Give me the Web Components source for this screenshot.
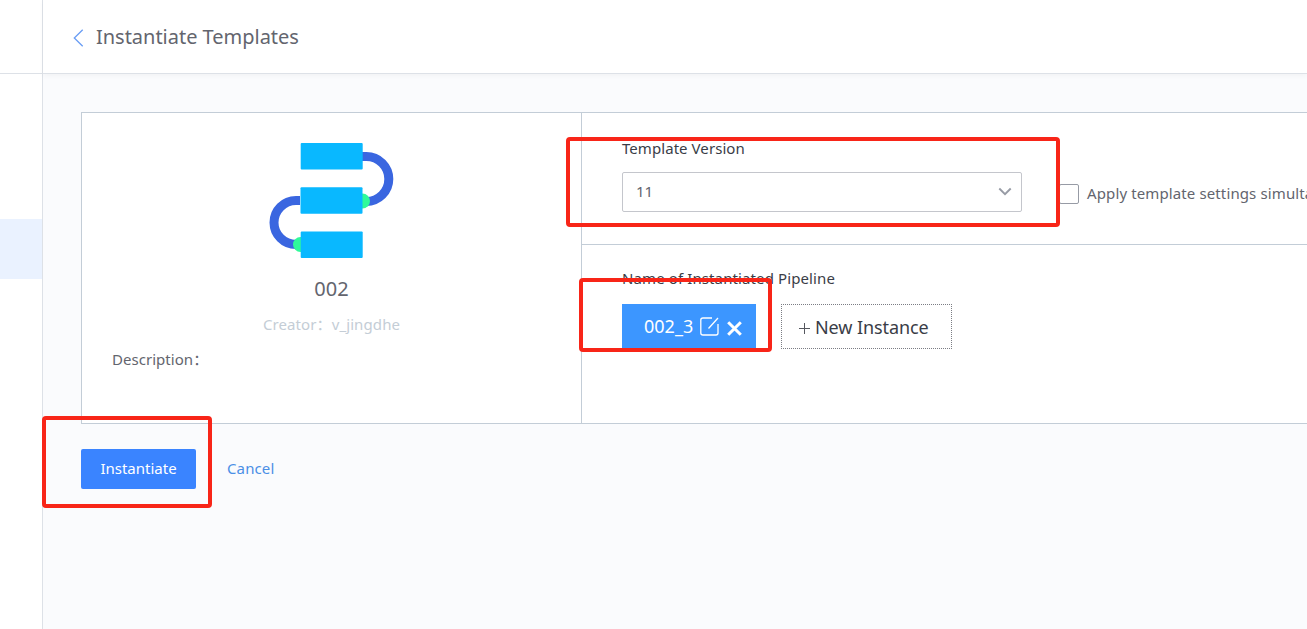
<!DOCTYPE html>
<html lang="en">
<head>
<meta charset="utf-8">
<title>Instantiate Templates</title>
<style>
html,body{margin:0;height:100%;overflow:hidden}
body{font-family:"Noto Sans","Open Sans","Noto Sans CJK SC",sans-serif;color:#63656e;background:#fff}
</style>
</head>
<body>
<app-shell>
  <side-nav slot="nav"></side-nav>
  <page-header slot="header">Instantiate Templates</page-header>
  <instance-card>
    <template-summary slot="summary" name="002" creator="v_jingdhe"></template-summary>
    <version-select slot="version" label="Template Version" value="11"></version-select>
    <check-option slot="version">Apply template settings simulta</check-option>
    <instance-list slot="instances" label="Name of Instantiated Pipeline"></instance-list>
  </instance-card>
  <action-bar></action-bar>
</app-shell>
<highlight-box style="--x:566px;--y:137px;--w:494px;--h:90px"></highlight-box>
<highlight-box style="--x:579px;--y:278px;--w:193px;--h:74px"></highlight-box>
<highlight-box style="--x:42px;--y:416px;--w:170px;--h:92px"></highlight-box>
<script>
function define(name, html) {
  customElements.define(name, class extends HTMLElement {
    constructor() {
      super();
      const root = this.attachShadow({mode: "open"});
      root.innerHTML = "<style>*{box-sizing:border-box}:host{box-sizing:border-box;white-space:nowrap}</style>" + html;
    }
    connectedCallback() {
      for (const el of this.shadowRoot.querySelectorAll("[data-attr]"))
        el.textContent = this.getAttribute(el.dataset.attr);
    }
  });
}

define("app-shell", `<style>
:host{display:grid;grid-template-columns:43px 1fr;height:629px;width:1307px;overflow:hidden}
.main{display:flex;flex-direction:column;min-width:0;background:#fafbfd}
.content{padding:38px 0 0 38px;overflow:hidden}
</style><slot name="nav"></slot>
<div class="main"><slot name="header"></slot><div class="content"><slot></slot></div></div>`);

define("side-nav", `<style>
:host{display:block;border-right:1px solid #dde1e7;background:#fff}
.logo{height:74px;border-bottom:1px solid #dde1e7}
.active{margin-top:145px;height:60px;background:#eaf2ff}
</style><div class="logo"></div><div class="active"></div>`);

define("page-header", `<style>
:host{display:flex;align-items:center;flex:none;height:74px;padding-left:30px;background:#fff;border-bottom:1px solid #dde1e7;box-shadow:0 2px 5px rgba(0,0,0,.035);font-size:20px;color:#63656e}
svg{margin:3px 12px 0 0}
span{letter-spacing:-.02px}
</style><svg width="11" height="18" viewBox="0 0 11 18" fill="none" stroke="#699df4" stroke-width="1.3"><path d="M9.700.7 1.300 9l8.400 8.300"/></svg><span><slot></slot></span>`);

define("instance-card", `<style>
:host{display:grid;grid-template-columns:500px 1fr;width:1400px;height:312px;border:1px solid #c3cdd7;background:#fff}
.left{border-right:1px solid #c3cdd7}
.right{display:grid;grid-template-rows:132px 1fr}
.top{display:flex;border-bottom:1px solid #c3cdd7;padding:24px 40px 0}
.bottom{padding:22px 40px}
</style><div class="left"><slot name="summary"></slot></div>
<div class="right"><div class="top"><slot name="version"></slot></div><div class="bottom"><slot name="instances"></slot></div></div>`);

define("template-summary", `<style>
:host{display:flex;flex-direction:column;align-items:center;padding:29px 0 0}
svg{display:block;margin-right:1px}
.name{font-size:20px;line-height:28px;margin-top:15px;letter-spacing:.1px}
.creator{font-size:15px;line-height:22px;margin-top:10px;color:#c4cdd6;letter-spacing:.1px}
.desc{align-self:flex-start;margin:13px 0 0 30px;font-size:15px;line-height:22px;letter-spacing:.04px}
</style>
<svg width="126" height="118" viewBox="0 0 126 118">
<g fill="none" stroke="#3a66e0" stroke-width="9"><path d="M93 14.500h5.300a22.500 22.500 0 0 1 0 45h-5.300"/><path d="M32 58.500h-4a22 22 0 0 0 0 44h4"/></g>
<g fill="#30fa9b"><circle cx="94.500" cy="59" r="7.500"/><circle cx="32.500" cy="102.500" r="7.500"/></g>
<g fill="#09b8ff"><rect x="32.700" y="1" width="62" height="26.500" rx="1"/><rect x="32.500" y="45.200" width="62" height="26.500" rx="1"/><rect x="32.700" y="89.500" width="62" height="26.500" rx="1"/></g></svg>
<div class="name" data-attr="name"></div>
<div class="creator"><span>Creator：</span><span data-attr="creator"></span></div>
<div class="desc">Description：</div>`);

define("version-select", `<style>
:host{display:block;width:400px}
.label{font-size:15px;line-height:22px;color:#3a3d47;letter-spacing:.06px}
.box{margin-top:13px;height:40px;border:1px solid #c4c6cc;border-radius:2px;display:flex;align-items:center;justify-content:space-between;padding:0 9px 0 13px;font-size:15px}
.box span{margin-top:-2px}
</style><div class="label" data-attr="label"></div>
<div class="box"><span data-attr="value"></span><svg width="14" height="10" viewBox="0 0 14 10" fill="none" stroke="#979ba5" stroke-width="1.900"><path d="m1.300 1.500 5.700 5.700 5.700-5.700"/></svg></div>`);

define("check-option", `<style>
:host{display:flex;align-items:center;height:22px;margin:46px 0 0 37px;font-size:15px}
i{width:20px;height:20px;border:1px solid #979ba5;border-radius:2px;margin-right:8px}
span{margin-top:-2px;letter-spacing:.12px}
</style><i></i><span><slot></slot></span>`);

define("instance-list", `<style>
:host{display:block}
.label{font-size:15px;line-height:22px;color:#3a3d47;letter-spacing:.11px}
.row{display:flex;gap:25px;margin-top:15px}
.chip{display:flex;align-items:center;width:134px;height:45px;padding-left:22px;background:#3c96ff;color:#fff;font-size:18px}
.chip span{margin-top:-2px}
.edit{margin:0 7px 0 7px}
.close{margin:4px 0 0 1px}
.new{display:flex;align-items:center;width:171px;height:45px;border:1px dotted #7b7d84;color:#3a3d47;font-size:18px;padding-left:17px}
.new span{letter-spacing:-.09px}
.new svg{margin:4px 5px 0 0}
</style><div class="label" data-attr="label"></div>
<div class="row"><div class="chip"><span>002_3</span>
<svg class="edit" width="19" height="19" viewBox="0 0 19 19" fill="none" stroke="#fff" stroke-width="1.3"><path d="M12 1H3Q.8 1 .8 3v13Q.8 18 3 18h13q2 0 2-2V7M18 1 8.500 11.500"/></svg>
<svg class="close" width="15" height="15" viewBox="0 0 15 15" fill="none" stroke="#fff" stroke-width="3"><path d="m1.200 1.200 12.600 12.600M13.800 1.200 1.200 13.800"/></svg></div>
<div class="new"><svg width="11" height="11" viewBox="0 0 11 11" stroke="#55575e"><path d="M5.500 0v11M0 5.500h11"/></svg><span>New Instance</span></div></div>`);

define("action-bar", `<style>
:host{display:flex;align-items:center;gap:31px;margin-top:25px;font-size:15px}
.primary{display:flex;align-items:center;justify-content:center;width:115px;height:40px;background:#3a84ff;border-radius:2px;color:#fff}
.primary span,.cancel{margin-top:-2px}
.cancel{color:#4a8fe6;letter-spacing:.12px}
</style><div class="primary"><span>Instantiate</span></div><span class="cancel">Cancel</span>`);

define("highlight-box", `<style>
:host{position:absolute;left:var(--x);top:var(--y);width:var(--w);height:var(--h);border:4px solid #f82518;border-radius:4px;pointer-events:none}
</style>`);
</script>
</body>
</html>
